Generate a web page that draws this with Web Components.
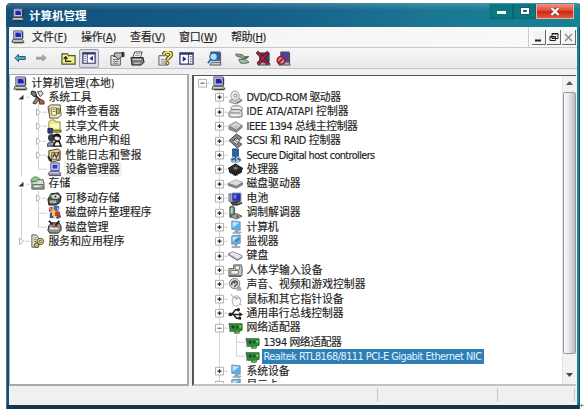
<!DOCTYPE html>
<html lang="zh-CN">
<head>
<meta charset="utf-8">
<title>计算机管理</title>
<style>
  html, body { margin: 0; background: #fff; }
  body {
    width: 584px;
    height: 411px;
    overflow: hidden;
    display: flex;
    font: 11px/14px "DejaVu Sans Condensed", "Noto Sans CJK SC", sans-serif;
    color: #222;
  }
  app-window { flex: none; margin: 3px 0 0 6px; }
  .mark { align-self: flex-end; font-size: 8px; line-height: 10px; color: #666; }
</style>
</head>
<body>
<app-window>
  <title-bar slot="title">计算机管理</title-bar>
  <menu-bar slot="menu">
    <menu-item w="35">文件(<u>F</u>)</menu-item>
    <menu-item w="35">操作(<u>A</u>)</menu-item>
    <menu-item w="35">查看(<u>V</u>)</menu-item>
    <menu-item w="38">窗口(<u>W</u>)</menu-item>
    <menu-item w="35">帮助(<u>H</u>)</menu-item>
  </menu-bar>
  <tool-bar slot="tools"></tool-bar>
  <tree-pane slot="left">
    <tree-row icon="pc" w="83">计算机管理(本地)</tree-row>
    <tree-row cells="v" icon="tools" w="43">系统工具</tree-row>
    <tree-row cells="|>" icon="event" w="54">事件查看器</tree-row>
    <tree-row cells="|>" icon="share" w="54">共享文件夹</tree-row>
    <tree-row cells="|>" icon="users" w="65">本地用户和组</tree-row>
    <tree-row cells="|>" icon="perf" w="76">性能日志和警报</tree-row>
    <tree-row cells="|L" icon="device" w="54" hot>设备管理器</tree-row>
    <tree-row cells="v" icon="storage" w="22">存储</tree-row>
    <tree-row cells="|>" icon="removable" w="54">可移动存储</tree-row>
    <tree-row cells="|T" icon="defrag" w="86">磁盘碎片整理程序</tree-row>
    <tree-row cells="|L" icon="diskmgr" w="43">磁盘管理</tree-row>
    <tree-row cells=")" icon="services" w="76">服务和应用程序</tree-row>
  </tree-pane>
  <tree-pane slot="right" sunken>
    <tree-row cells="m" icon="pc"></tree-row>
    <tree-row cells=" +" icon="dvd" w="94">DVD/CD-ROM 驱动器</tree-row>
    <tree-row cells=" +" icon="ide" w="102">IDE ATA/ATAPI 控制器</tree-row>
    <tree-row cells=" +" icon="chip" w="111">IEEE 1394 总线主控制器</tree-row>
    <tree-row cells=" +" icon="scsi" w="94">SCSI 和 RAID 控制器</tree-row>
    <tree-row cells=" +" icon="sd" w="128">Secure Digital host controllers</tree-row>
    <tree-row cells=" +" icon="cpu" w="32">处理器</tree-row>
    <tree-row cells=" +" icon="drive" w="54">磁盘驱动器</tree-row>
    <tree-row cells=" +" icon="battery" w="22">电池</tree-row>
    <tree-row cells=" +" icon="modem" w="54">调制解调器</tree-row>
    <tree-row cells=" +" icon="monitor" w="32">计算机</tree-row>
    <tree-row cells=" +" icon="screen" w="32">监视器</tree-row>
    <tree-row cells=" +" icon="keyboard" w="22">键盘</tree-row>
    <tree-row cells=" +" icon="hid" w="76">人体学输入设备</tree-row>
    <tree-row cells=" +" icon="sound" w="119">声音、视频和游戏控制器</tree-row>
    <tree-row cells=" +" icon="mouse" w="97">鼠标和其它指针设备</tree-row>
    <tree-row cells=" +" icon="usb" w="97">通用串行总线控制器</tree-row>
    <tree-row cells=" -" icon="nic" w="54">网络适配器</tree-row>
    <tree-row cells=" |T" icon="nic" w="78">1394 网络适配器</tree-row>
    <tree-row cells=" |L" icon="nic" w="218" selected>Realtek RTL8168/8111 PCI-E Gigabit Ethernet NIC</tree-row>
    <tree-row cells=" +" icon="monitor" w="43">系统设备</tree-row>
    <tree-row cells=" +" icon="screen" w="32">显示卡</tree-row>
  </tree-pane>
  <status-bar slot="status"></status-bar>
</app-window>
<span class="mark">↵</span>

<script>
const ICONS = {
  pc: `<path d="M3 1h10v9H3z" fill="#c8c6dc" stroke="#55546a"/><path d="M5 3h6.500v5H5z" fill="#1d22b8"/><path d="M9 3h3v3z" fill="#6f7cf0"/><path d="M2 11h11l2 3H1z" fill="#d5d3cc" stroke="#444"/><path d="M3 14.700h11M13.500 2v8" stroke="#222"/>`,
  tools: `<path d="M2 2l11 12" stroke="#333" stroke-width="2.500"/><path d="M2 1l4 1 1 4-3 1-3-3z" fill="#777" stroke="#222"/><path d="M8 2l4-1 2 3-3 3z" fill="#ddd" stroke="#444"/><path d="M3 14l4-6 3 2-4 5z" fill="#8a8a8a" stroke="#333"/><path d="M10 9l5 3v3h-5z" fill="#ad6538" stroke="#5c2f18"/>`,
  event: `<path d="M1 3l3-2h10l1 11-3 3H3z" fill="#f0ecc0" stroke="#4c4938"/><path d="M3 3v10M5 4h5v8H5z" fill="#fffce0" stroke="#8a7e40"/><path d="M10 5h3v5h-3z" fill="#d4bf50" stroke="#554"/><path d="M6 6h3M6 8h3" stroke="#776"/>`,
  share: `<path d="M2 3l2-2h4l1 2h5v9H2z" fill="#ece88c" stroke="#8b8940"/><path d="M3 5h10v5H3z" fill="#fbf8b8"/><path d="M1 10h5v5H1z" fill="#2a3a8c" stroke="#1b2340"/><path d="M6 12h9v2H6z" fill="#b5c04a" stroke="#555a22"/>`,
  users: `<circle cx="5" cy="5" r="4" fill="#3a3f46"/><path d="M0 14c0-6 9-6 9 0z" fill="#8d9ba0" stroke="#222"/><circle cx="11" cy="5" r="3.500" fill="#f1e7d3" stroke="#111"/><path d="M6 5c1-6 9-6 9 1-3-3-5-3-9-1z" fill="#111"/><path d="M7 14l2-5h4l2 5z" fill="#fff" stroke="#111" stroke-width="1.500"/>`,
  perf: `<path d="M2 3l10-2 2 2v10l-9 2-3-2z" fill="#e3d990" stroke="#3d3922"/><path d="M5 5h8v7H5z" fill="#eee8d0" stroke="#555"/><path d="M6 10l2-4 2 4 3-6" fill="none" stroke="#6a3a28" stroke-width="1.500"/><path d="M1 9l4 5" stroke="#222" stroke-width="2"/>`,
  device: `<path d="M4 1h9v8H4z" fill="#c4c8f0" stroke="#55599a"/><path d="M6 3h5v4H6z" fill="#2938c8"/><path d="M3 10h10l2 3H1z" fill="#c9c9d8" stroke="#51516b"/><path d="M2 14.500h13" stroke="#31317a"/>`,
  storage: `<path d="M2 7l3-3h9l1 4v6H2z" fill="#dbe1d8" stroke="#4e5551"/><path d="M3 9h11v4H3z" fill="#aebab4" stroke="#5a665f"/><path d="M1 5c1-5 7-5 9-2L7 6H1z" fill="#8dca84" stroke="#3f8448"/><path d="M4 11h6" stroke="#fff"/>`,
  removable: `<path d="M1 9l3-6 8-1 3 4-1 6-4 3H2z" fill="#4c554c" stroke="#171c17"/><ellipse cx="9" cy="6" rx="5" ry="3" fill="#cbd8dd" stroke="#222"/><circle cx="9" cy="6" r="1" fill="#222"/><path d="M3 10h7v3H3z" fill="#b1b3a8"/><path d="M2 6l2-3 2 3z" fill="#65a551"/>`,
  defrag: `<path d="M2 2h4v5H2z" fill="#c63929"/><path d="M7 1h6v6H7z" fill="#3c68c9"/><path d="M3 8h4v6H3z" fill="#29519d"/><path d="M8 7h6v5H8z" fill="#d43828"/><path d="M6 4l3 2-1 8-3-3z" fill="#f1c735"/><path d="M9 13l5-3 1 3-4 2z" fill="#555"/><path d="M2 2l3 4M11 3l2 4" stroke="#eee"/>`,
  diskmgr: `<path d="M2 6l3-3h8l2 4v4l-3 3H3l-2-3z" fill="#8f9193" stroke="#222"/><path d="M3 9h9" stroke="#eee" stroke-width="2"/><path d="M2 1l4 4M13 1L9 6" stroke="#222" stroke-width="2"/><path d="M6 7h6" stroke="#b63b2a" stroke-width="1.500"/>`,
  services: `<path d="M2 1h5l2 3v10H2z" fill="#e8e5d3" stroke="#55523e"/><path d="M4 4h3M4 6h3M4 8h3" stroke="#777"/><circle cx="11" cy="8" r="3.500" fill="#e4d488" stroke="#5a4e22"/><circle cx="11" cy="8" r="1.200" fill="#fff" stroke="#443"/><circle cx="7" cy="12" r="2.500" fill="#c7bd8c" stroke="#4a4426"/>`,
  dvd: `<path d="M2 11l9-3 4 3-6 4-7-2z" fill="#c9c9c9" stroke="#888"/><ellipse cx="7.500" cy="6" rx="4.500" ry="5" fill="#e9e9ec" stroke="#9b9b9f"/><circle cx="8" cy="6" r="1.500" fill="#fff" stroke="#777"/><path d="M9 14l6-3" stroke="#555"/>`,
  ide: `<path d="M3 4l2-2h8l2 2v3H4z" fill="#eee" stroke="#777"/><path d="M1 9l3-3h9l2 3v4l-2 1H3l-2-1z" fill="#ddd" stroke="#666"/><path d="M2 9.500h11" stroke="#777"/><path d="M4 12h7" stroke="#fff"/>`,
  chip: `<path d="M1 7l7-4 7 4-6 5z" fill="#c8c8c8" stroke="#888"/><path d="M1 8v3l8 3 6-5V7l-6 5z" fill="#969696" stroke="#777"/><path d="M5 7l4-2 3 2" fill="none" stroke="#eee"/>`,
  scsi: `<path d="M1 8l8-7 6 4-3 2-3-2-4 4 4 3 3-2 3 2-5 4z" fill="#888" stroke="#444"/><path d="M7 8l3-2 3 2-3 2z" fill="#ddd" stroke="#555"/>`,
  sd: `<path d="M5 1h6v8H5z" fill="#2366b2" stroke="#174373"/><path d="M3 12l3-3h5l3 4-3 2H4z" fill="#b9cbd8" stroke="#6b8ba4"/><path d="M8 8v6M4 13l3-2M10 11l3 2" stroke="#1d5496" stroke-width="1.500"/>`,
  cpu: `<path d="M0 7l8-5 8 5-8 5z" fill="#2c2c2c" stroke="#111"/><path d="M1 8v3l7 4 7-4V8l-7 4z" fill="#151515"/><path d="M5 6.500l3-2 3 2-3 2z" fill="#777"/><path d="M3 10v3M6 12v3M10 12v3M13 10v3" stroke="#666" stroke-width=".7"/>`,
  drive: `<path d="M0 8l8-4 8 3-7 4z" fill="#dcdcdc" stroke="#aaa"/><path d="M0 8v2l9 3 7-4V7l-7 4z" fill="#8d8d8d" stroke="#777"/>`,
  battery: `<path d="M4 2h10v9H4z" fill="#2930a5" stroke="#b7bad7"/><path d="M6 4h3v4H6z" fill="#6c7cf0"/><path d="M1 3h2v8H1z" fill="#c4cbb4" stroke="#668"/><path d="M3 12l9-1 3 2-5 2H5z" fill="#494e61" stroke="#222"/><path d="M10 13l4-1" stroke="#61a350" stroke-width="1.500"/>`,
  modem: `<path d="M2 2l3-1 2 2v10H2z" fill="#698875" stroke="#3d5849"/><path d="M4 3v6" stroke="#b9dec4" stroke-width="2"/><path d="M2 12l7-3 6 3-6 3z" fill="#a1a6a2" stroke="#555"/><circle cx="10" cy="12" r="1" fill="#333"/>`,
  monitor: `<path d="M4 1l9 1v9l-9-1z" fill="#5bb0ea" stroke="#8094aa"/><path d="M5 2l7 1-7 5z" fill="#c0e9ff"/><path d="M7 11h4v2H7z" fill="#8c9daf"/><path d="M5 14h8l1-1H7z" fill="#c1c9d2" stroke="#8b97a5"/>`,
  screen: `<path d="M4 2l9-1v9l-9 1z" fill="#65b4de" stroke="#778ca1"/><path d="M5 3h6l-6 5z" fill="#b6e5f8"/><path d="M8 8l4-3" stroke="#3b7fc0" stroke-width="2"/><path d="M7 11h3v2H7z" fill="#7c909e"/><path d="M4 14h9" stroke="#9ba8b4" stroke-width="2"/>`,
  keyboard: `<path d="M0 6l5-2 10 4v2l-5 3z" fill="#d0d0de" stroke="#8b8ba1"/><path d="M3 6l8 4M5 5l8 4" stroke="#fff"/><path d="M0 7l10 6 5-3" fill="none" stroke="#666681"/>`,
  hid: `<path d="M1 6h5V2h8l1 3v8l-2 1H1z" fill="#c9c9c9" stroke="#555"/><path d="M3 8h8v4H3z" fill="#eee" stroke="#777"/><circle cx="10" cy="5" r="2.500" fill="#f5f5f5" stroke="#666"/><path d="M1 14h13" stroke="#333"/>`,
  sound: `<path d="M7 8l6 2 2 4-5 1z" fill="#aaa"/><circle cx="7" cy="7" r="5.500" fill="#ddd" stroke="#777"/><path d="M4 9c-1-5 5-6 6-3s-4 3-3 5" fill="none" stroke="#555" stroke-width="1.500"/><circle cx="7" cy="6" r="1" fill="#333"/>`,
  mouse: `<ellipse cx="9" cy="9.500" rx="4.500" ry="5.500" fill="#fafafa" stroke="#aaa"/><path d="M3 2l3 4M6 6l7 1M9 5v3" stroke="#999" fill="none"/><path d="M12 13l3 1" stroke="#bbb"/>`,
  usb: `<path d="M1 9h12M4 9l4-5h3M6 9l3 4h3" fill="none" stroke="#222" stroke-width="1.600"/><circle cx="2.500" cy="9" r="2" fill="#222"/><path d="M12 6.500l4 2.500-4 2.500z" fill="#222"/><circle cx="11" cy="4" r="1.800" fill="#222"/><path d="M11 11.500h3v3h-3z" fill="#222"/>`,
  nic: `<path d="M1 4h14v7l-3 1v2H7v-2H3z" fill="#2e8b3b" stroke="#2b6b35"/><path d="M2 3v10" stroke="#666"/><path d="M4 6h3v3H4zM9 6h2v3H9z" fill="#17461d"/><path d="M12 6h2v2h-2z" fill="#a6d669"/><path d="M8 13h4" stroke="#c8b64a"/>`,
  // toolbar
  back: `<path d="M1 8l5-5v3h9v4H6v3z" fill="#4fb5b8" stroke="#1c4d6c" stroke-width="1.200"/>`,
  forward: `<path d="M15 8l-5-4v3H2v2.500h8V12z" fill="#aaa" stroke="#8c8c8c"/>`,
  up: `<path d="M1 3h6l1 2h7v9H1z" fill="#f3f08a" stroke="#55522a" stroke-width="1.300"/><path d="M5 7v4h6M3 8.500L5 6l2 2.500" fill="none" stroke="#222" stroke-width="1.300"/>`,
  panel: `<path d="M1 2h14v12H1z" fill="#fff" stroke="#33346e" stroke-width="1.400"/><path d="M1 3h14" stroke="#33346e" stroke-width="2"/><path d="M6 3v11" stroke="#33346e"/><path d="M2.500 6h2M2.500 8.500h2M2.500 11h2" stroke="#555"/><path d="M12.500 5.500v6L8.500 8.500z" fill="#222a80"/>`,
  panel2: `<path d="M1 2h14v12H1z" fill="#fff" stroke="#33346e" stroke-width="1.400"/><path d="M1 3h14" stroke="#33346e" stroke-width="2"/><path d="M10 3v11" stroke="#33346e"/><path d="M11.500 6h2M11.500 8.500h2M11.500 11h2" stroke="#555"/><path d="M4 5.500v6l4-3z" fill="#222a80"/>`,
  props: `<path d="M1 5h10v10H1z" fill="#ededed" stroke="#444"/><path d="M3 9h6M3 11h6M3 13h6" stroke="#666"/><path d="M5 2h10v4h-3l-3 3-3-3H4z" fill="#bbb" stroke="#333"/><path d="M13.500 1v5" stroke="#222" stroke-width="2"/>`,
  print: `<path d="M5 1h8l-2 6H3z" fill="#fff" stroke="#444"/><path d="M1 7h13l1 5-3 3H2z" fill="#777" stroke="#222"/><path d="M3 9h9M4 13h7" stroke="#ddd"/><path d="M6 3h5M5 5h5" stroke="#888"/>`,
  help: `<path d="M1 5h9v10H1z" fill="#eee" stroke="#555"/><path d="M3 9h5M3 11h5M3 13h5" stroke="#888"/><path d="M6 4c1-4 8-4 8 0 0 3-4 2-4 6" fill="none" stroke="#443e17" stroke-width="4"/><path d="M6 4c1-4 8-4 8 0 0 3-4 2-4 6" fill="none" stroke="#efdf55" stroke-width="2"/><circle cx="10" cy="13" r="1.700" fill="#efdf55" stroke="#443e17"/>`,
  scan: `<path d="M4 1h10v9H4z" fill="#2e5fb5" stroke="#56636f"/><circle cx="7" cy="6" r="4" fill="#a9e3f2" stroke="#1c5d9d" stroke-width="1.200"/><path d="M4 9l-3 4" stroke="#2b6baa" stroke-width="2"/><path d="M5 12h9l1 3H3z" fill="#c8cccb" stroke="#4b5555"/><path d="M14.500 2v11" stroke="#555"/>`,
  update: `<path d="M1 3l7 1 2 2h3v2H8L1 5z" fill="#83a486" stroke="#5d7563"/><path d="M4 9h7l4 3-3 1H6z" fill="#a7bda5" stroke="#53665a"/><path d="M10 7l5-1" stroke="#526b56" stroke-width="1.500"/>`,
  uninstall: `<path d="M4 2h10v9H4z" fill="#42407a" stroke="#444"/><path d="M3 12h11l1 3H2z" fill="#a9a9b1" stroke="#444"/><path d="M1 1l12 13M13 1L2 14" stroke="#3d121e" stroke-width="3.500"/><path d="M1 1l12 13M13 1L2 14" stroke="#b3203a" stroke-width="2"/>`,
  disable: `<path d="M5 1h9v10H5z" fill="#4543a1" stroke="#555"/><path d="M4 12h10l1 3H3z" fill="#b8b8bd" stroke="#444"/><circle cx="5.500" cy="10" r="4" fill="#c7a7b8" stroke="#a51d2c" stroke-width="2"/><path d="M3 12.500l5-5" stroke="#a51d2c" stroke-width="2"/><path d="M14.500 2v11" stroke="#444"/>`
};

const svg = (name, size = 15) =>
  `<svg width="${size}" height="${size}" viewBox="0 0 16 16">${ICONS[name] || ''}</svg>`;

// spreads the label over the width given in the w attribute
function fitLabel(host) {
  const span = host.shadowRoot.querySelector('.label');
  const w = Number(host.getAttribute('w'));
  const n = host.textContent.length;
  if (!w || !n) return;
  span.style.letterSpacing = (w - span.getBoundingClientRect().width) / n + 'px';
}

class AppWindow extends HTMLElement {
  constructor() {
    super();
    this.attachShadow({ mode: 'open' }).innerHTML = `
      <style>
        :host {
          display: flex; flex-direction: column; box-sizing: border-box;
          width: 574px; height: 406px; padding: 0 3px 4px;
          background: linear-gradient(90deg, #174f78, #15839b);
          border-radius: 5px 3px 0 0;
          box-shadow: inset 1px 0 #3f7896, inset -1px 0 #145167, inset 0 -4px #183448;
        }
        .client { flex: 1; display: flex; flex-direction: column; background: #f1f1f2; min-height: 0; }
        .panes { flex: 1; display: flex; gap: 3px; min-height: 0; padding-top: 5px; }
        .left { width: 180px; display: flex; }
        .right { flex: 1; display: flex; min-width: 0; }
      </style>
      <slot name="title"></slot>
      <div class="client">
        <slot name="menu"></slot>
        <slot name="tools"></slot>
        <div class="panes">
          <div class="left"><slot name="left"></slot></div>
          <div class="right"><slot name="right"></slot></div>
        </div>
        <slot name="status"></slot>
      </div>`;
  }
}

class TitleBar extends HTMLElement {
  constructor() {
    super();
    this.attachShadow({ mode: 'open' }).innerHTML = `
      <style>
        :host {
          display: flex; height: 24px; margin: 0 -3px; padding: 0 6px 0 5px; box-sizing: border-box;
          border-radius: 5px 3px 0 0; color: #fff; font-weight: bold; font-size: 11.5px;
          background: linear-gradient(#ffffff2e, #fff0 30%), linear-gradient(90deg, #10507b, #165f87 45%, #1b7794 75%, #128494);
        }
        svg { margin: 5px 4px 0 0; }
        .text { flex: 1; line-height: 26px; }
        .btn { height: 15px; margin-top: 1px; box-sizing: border-box; display: flex; align-items: center; justify-content: center; }
        .min, .max { width: 23px; background: #0b7780; border: 1px solid #096773; border-top: 0; }
        .close { width: 38px; background: linear-gradient(#f0957e, #dd4a35 48%, #c92818 52%, #e3563a); border: 1px solid #f3b09c; border-top: 0; }
        .min i { width: 9px; height: 3px; background: #fff; margin-top: 3px; }
        .max i { width: 4px; height: 2px; border: 2px solid #fff; outline: 1px solid #235a65; }
        .close svg { margin: 0; }
      </style>
      ${svg('pc', 14)}<span class="text"><slot></slot></span>
      <div class="btn min"><i></i></div>
      <div class="btn max"><i></i></div>
      <div class="btn close"><svg width="10" height="9" viewBox="0 0 10 9"><path d="M1.500 1l7 7M8.500 1l-7 7" stroke="#833" stroke-width="3.600"/><path d="M1.500 1l7 7M8.500 1l-7 7" stroke="#fff" stroke-width="2.300"/></svg></div>`;
  }
}

class MenuBar extends HTMLElement {
  constructor() {
    super();
    this.attachShadow({ mode: 'open' }).innerHTML = `
      <style>
        :host { display: flex; align-items: center; height: 21px; box-sizing: border-box; border-bottom: 1px solid #c9c9c9; background: linear-gradient(90deg, #f3f3f4, #f9f9f9); padding: 0 1px 0 2px; }
        .items { flex: 1; display: flex; gap: 14px; margin-left: 7px; padding-top: 2px; }
        .mdi { display: flex; align-items: center; gap: 1px; border-left: 1px solid #ccc; height: 20px; padding-left: 3px; }
        .mdi svg { background: #f3f3f3; border: solid #666; border-width: 0 1.500px 1.500px 0; box-shadow: inset 1px 1px #fff; }
      </style>
      ${svg('pc', 14)}
      <div class="items"><slot></slot></div>
      <div class="mdi">
        <svg width="13" height="14"><path d="M3 10.500h6" stroke="#222" stroke-width="2"/></svg>
        <svg width="13" height="14"><path d="M5 3.500h6v5H5zM3 6.500h5.500v4H3z" fill="#eee" stroke="#222"/><path d="M5 4h6M3 7h6" stroke="#222"/></svg>
        <svg width="13" height="14"><path d="M3 4l7 7M10 4l-7 7" stroke="#888" stroke-width="1.300"/></svg>
      </div>`;
  }
}

class MenuItem extends HTMLElement {
  constructor() {
    super();
    this.attachShadow({ mode: 'open' }).innerHTML = `
      <style>:host { display: block; white-space: nowrap; font-size: 11px; -webkit-text-stroke: .15px; }</style>
      <span class="label"><slot></slot></span>`;
  }
  connectedCallback() { fitLabel(this); }
}

class ToolBar extends HTMLElement {
  constructor() {
    super();
    const groups = [['back', 'forward'], ['up', '*panel'], ['props', 'print'], ['help', 'panel2'], ['scan'], ['update', 'uninstall', 'disable']];
    this.attachShadow({ mode: 'open' }).innerHTML = `
      <style>
        :host { display: flex; align-items: center; height: 21px; box-sizing: border-box; border-bottom: 1px solid #c4c4c6; background: linear-gradient(#f7f7f7, #e9e9eb); padding-left: 1px; gap: 7.700px; }
        .group { display: flex; }
        .group span { width: 20.500px; height: 19px; display: flex; align-items: center; justify-content: center; box-sizing: border-box; }
        .group span.on { width: 20px; border: 1px solid #9c9eb4; border-radius: 2px; background: #dcdde9; }
      </style>
      ${groups.map(g => `<div class="group">${g.map(n => n[0] === '*'
        ? `<span class="on">${svg(n.slice(1), 14)}</span>`
        : `<span>${svg(n, n === 'back' || n === 'forward' ? 12 : 15)}</span>`).join('')}</div>`).join('')}`;
  }
}

class TreePane extends HTMLElement {
  constructor() {
    super();
    this.attachShadow({ mode: 'open' }).innerHTML = `
      <style>
        :host { display: flex; flex: 1; min-width: 0; box-sizing: border-box; overflow: hidden; background: #fff; border: 1px solid #a9a9ab; border-width: 1px 2px 2px 1px; }
        :host([sunken]) { margin: 1px 1px 0 0; border: solid #555; border-width: 1.500px 0 0 2px; border-bottom: 2px solid #c3c3c5; }
        .rows { flex: 1; min-width: 0; overflow: hidden; padding: 1px 0 0 2.500px; }
        :host([sunken]) .rows { padding: 0; margin: 0 0 1px -.5px; }
        .scroll { display: none; width: 14px; background: #f2f2f3; flex-direction: column; align-items: center; box-sizing: border-box; border-left: 1px solid #e3e3e3; }
        :host([sunken]) .scroll { display: flex; }
        .thumb { width: 11px; height: 260px; border: 1px solid #999; border-radius: 2px; background: linear-gradient(90deg, #fafafa, #e3e3e7 50%, #bbbbc3); }
        .up { margin: 5px 0 7px; } .down { margin-top: auto; margin-bottom: 7px; }
      </style>
      <div class="rows"><slot></slot></div>
      <div class="scroll">
        <svg class="up" width="7" height="4"><path d="M0 4l3.500-4L7 4z" fill="#555"/></svg>
        <div class="thumb"></div>
        <svg class="down" width="7" height="4"><path d="M0 0h7L3.500 4z" fill="#444"/></svg>
      </div>`;
  }
}

// one character of the cells attribute = one 17px indent column
const LINE = 'stroke="#d0d0d0" fill="none"';
const BOX = '<path d="M4.500 3.500h8v8h-8z" fill="#fff" stroke="#b0b0b0"/>';
const CELLS = {
  ' ': '',
  '|': `<path d="M8.500 0v15" ${LINE}/>`,
  'T': `<path d="M8.500 0v15M8.500 7.500H17" ${LINE}/>`,
  'L': `<path d="M8.500 0v7.500H17" ${LINE}/>`,
  'v': `<path d="M8.500 11v4M13 7.500h4" ${LINE}/><path d="M10.500 5v5h-5z" fill="#333"/>`,
  '>': `<path d="M8.500 0v15M12 7.500h5" ${LINE}/><path d="M6.500 4v7l4-3.500z" fill="#fff" stroke="#b4b4b4"/>`,
  ')': `<path d="M8.500 0v4M12 7.500h5" ${LINE}/><path d="M6.500 4v7l4-3.500z" fill="#fff" stroke="#b4b4b4"/>`,
  '+': `<path d="M8.500 0v15M12 7.500h5" ${LINE}/>${BOX}<path d="M6.500 7.500h4M8.500 5.500v4" stroke="#222" stroke-width="1.200"/>`,
  '-': `<path d="M8.500 0v15M12 7.500h5" ${LINE}/>${BOX}<path d="M6.500 7.500h4" stroke="#444"/>`,
  'm': `<path d="M12 7.500h5" ${LINE}/>${BOX}<path d="M6.500 7.500h4" stroke="#444"/>`
};

class TreeRow extends HTMLElement {
  constructor() {
    super();
    this.attachShadow({ mode: 'open' });
  }
  connectedCallback() {
    const cells = [...(this.getAttribute('cells') || '')];
    this.shadowRoot.innerHTML = `
      <style>
        :host { display: flex; align-items: center; height: 14.400px; white-space: nowrap; font-size: 10.800px; -webkit-text-stroke: .15px; }
        svg { flex: none; }
        .text { margin-left: 2px; padding: 1px 2px 0; line-height: 14px; height: 14px; }
        :host([hot]) .text { background: #f2f2f2; }
        :host([selected]) .text { background: #2f7fb5; color: #e2f4ff; -webkit-text-stroke: 0; }
      </style>
      ${cells.map(c => `<svg width="17" height="14.400" viewBox="0 0 17 15" preserveAspectRatio="none">${CELLS[c]}</svg>`).join('')}
      ${svg(this.getAttribute('icon'))}
      <div class="text"><span class="label"><slot></slot></span></div>`;
    fitLabel(this);
  }
}

class StatusBar extends HTMLElement {
  constructor() {
    super();
    this.attachShadow({ mode: 'open' }).innerHTML = `
      <style>
        :host { display: flex; height: 19px; background: #f0f0f1; padding: 2px 2px 3px 0; box-sizing: border-box; }
        i { border-right: 1px solid #c8c8c8; }
        .a { width: 368px; } .b { width: 119px; } .c { flex: 1; }
      </style>
      <i class="a"></i><i class="b"></i><i class="c"></i>`;
  }
}

customElements.define('app-window', AppWindow);
customElements.define('title-bar', TitleBar);
customElements.define('menu-bar', MenuBar);
customElements.define('menu-item', MenuItem);
customElements.define('tool-bar', ToolBar);
customElements.define('tree-pane', TreePane);
customElements.define('tree-row', TreeRow);
customElements.define('status-bar', StatusBar);
</script>
</body>
</html>
